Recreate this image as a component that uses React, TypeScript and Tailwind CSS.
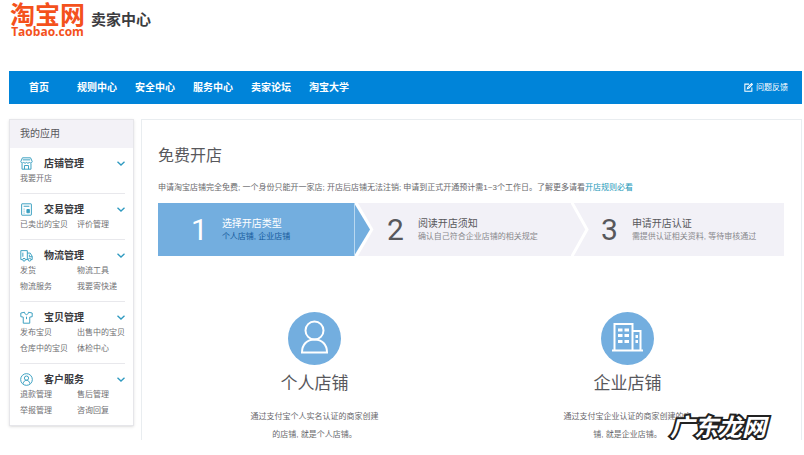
import type { ReactNode } from 'react';

const navLinks = ['规则中心', '安全中心', '服务中心', '卖家论坛', '淘宝大学'];

function ShopIcon() {
  return (
    <>
      <path d="M3 1h10l2 4.500a2 2 0 0 1-3.500 1.200 2.300 2.300 0 0 1-3.500 0 2.300 2.300 0 0 1-3.500 0A2 2 0 0 1 1 5.500z" />
      <path d="M2.500 8v7h11V8M3.500 3.500h9M5.500 15v-4.500h5V15" />
    </>
  );
}

function TradeIcon() {
  return (
    <>
      <rect x="2" y="1" width="12" height="14" rx="0.500" />
      <path d="M4.500 4h7M4.500 7.500h1M4.500 10h1M4.500 12.500h1" />
      <path d="M8.500 8h3v4h-3z" fill="currentColor" />
    </>
  );
}

function TruckIcon() {
  return (
    <>
      <path d="M3 13H1V2h8v11H7M9 5h3.500L15 9v4h-1.500M9 13h1" />
      <path d="M3.500 4.500v5M11.500 7v2.500H15" />
      <circle cx="5" cy="13.200" r="1.700" />
      <circle cx="11.800" cy="13.200" r="1.700" />
    </>
  );
}

function ShirtIcon() {
  return (
    <>
      <path d="M5.500 1.500 1 2.500v4.500l3 .5v7.500h8V7.500l3-.5V2.500l-4.500-1C10 3.500 9.200 4.500 8 4.500S6 3.500 5.500 1.500z" />
      <path d="M8 7v3" />
    </>
  );
}

function ServiceIcon() {
  return (
    <>
      <circle cx="8" cy="8" r="7.200" />
      <circle cx="8" cy="6.300" r="2.600" />
      <path d="M4 13c.3-2.500 1.800-4 4-4s3.700 1.500 4 4" />
    </>
  );
}

const apps: { title: string; icon: ReactNode; items: string[] }[] = [
  { title: '店铺管理', icon: <ShopIcon />, items: ['我要开店'] },
  { title: '交易管理', icon: <TradeIcon />, items: ['已卖出的宝贝', '评价管理'] },
  {
    title: '物流管理',
    icon: <TruckIcon />,
    items: ['发货', '物流工具', '物流服务', '我要寄快递'],
  },
  {
    title: '宝贝管理',
    icon: <ShirtIcon />,
    items: ['发布宝贝', '出售中的宝贝', '仓库中的宝贝', '体检中心'],
  },
  {
    title: '客户服务',
    icon: <ServiceIcon />,
    items: ['退款管理', '售后管理', '举报管理', '咨询回复'],
  },
];

function Header() {
  return (
    <header>
      <div className="flex h-[71px] items-start px-[10px] pt-1">
        <a href="#" className="flex flex-col items-center text-[#f4511c]">
          <span className="text-[25px] leading-[22px] font-bold">淘宝网</span>
          <span className="font-['Open_Sans','Noto_Sans',sans-serif] text-[12px] leading-3 font-bold">
            Taobao.com
          </span>
        </a>
        <span className="ml-[6px] pt-1 text-[15px] leading-6 font-bold text-[#3c3c40]">
          卖家中心
        </span>
      </div>

      <nav className="mr-[2px] ml-[9px] flex h-[33px] items-center bg-[#0084d9] pr-[14px] pl-[20px] text-[10px] font-bold text-white">
        <a href="#" className="w-12">
          首页
        </a>
        <div className="flex gap-[18px]">
          {navLinks.map((link) => (
            <a key={link} href="#">
              {link}
            </a>
          ))}
        </div>
        <a href="#" className="ml-auto flex items-center gap-[3px] text-[8px] font-normal">
          <svg viewBox="0 0 16 16" className="size-[9px]" fill="none" stroke="currentColor" strokeWidth="1.800">
            <path d="M9 2H1.500v12.500H14V8" />
            <path d="m6 10 1-3 6.500-6 1.500 1.500L9 9z" />
          </svg>
          问题反馈
        </a>
      </nav>
    </header>
  );
}

function Sidebar() {
  return (
    <aside className="w-[125px] shrink-0 self-start border border-[#e6e6ea] bg-white shadow-sm">
      <h2 className="h-7 bg-[#f3f2f7] pl-[10px] text-[10px] leading-7 text-[#58585c]">我的应用</h2>
      <div className="pr-2 pl-[10px]">
        {apps.map(({ title, icon, items }) => (
          <section key={title} className="border-b border-[#e8e8ec] pt-2 pb-[6px] last:border-b-0">
            <button
              type="button"
              className="flex h-[15px] w-full items-center text-[10px] font-bold text-[#3a3a3e]"
            >
              <svg
                viewBox="0 0 16 16"
                className="size-[13px] text-[#3a9fc0]"
                fill="none"
                stroke="currentColor"
                strokeWidth="1.200"
              >
                {icon}
              </svg>
              <span className="ml-[11px]">{title}</span>
              <svg viewBox="0 0 8 5" className="ml-auto h-[5px] w-2" fill="none" stroke="#2f9ac0" strokeWidth="1.300">
                <path d="m.5.700 3.500 3.300L7.500.700" />
              </svg>
            </button>
            <ul className="grid grid-cols-[57px_1fr] text-[8px] leading-4 whitespace-nowrap text-[#707074]">
              {items.map((item) => (
                <li key={item}>
                  <a href="#">{item}</a>
                </li>
              ))}
            </ul>
          </section>
        ))}
      </div>
    </aside>
  );
}

function StepText({ num, title, note }: { num: string; title: string; note: ReactNode }) {
  return (
    <>
      <span className="font-[Roboto,sans-serif] text-[30px] leading-8">{num}</span>
      <div className="ml-[14px] whitespace-nowrap">
        <h3 className="text-[10px] leading-[13px]">{title}</h3>
        {note}
      </div>
    </>
  );
}

function Steps() {
  return (
    <ol className="grid h-[53px] grid-cols-[196fr_217fr_213fr] bg-[#f2f1f7] text-[#58585c]">
      <li className="flex items-center bg-[#73aedf] pl-[33px] text-white">
        <StepText
          num="1"
          title="选择开店类型"
          note={<p className="text-[8px] leading-[13px] text-[#165a9c]">个人店铺, 企业店铺</p>}
        />
      </li>
      <li className="relative flex items-center pl-[33px]">
        <svg viewBox="0 0 20 53" className="absolute top-0 left-0 h-full w-5">
          <path d="M0 0h4l15.500 26.500L4 53H0z" fill="#fff" />
          <path d="M0 0 16 26.500 0 53z" fill="#73aedf" />
          <path d="M.5 0v53" stroke="#b9d8f0" />
        </svg>
        <StepText
          num="2"
          title="阅读开店须知"
          note={<p className="text-[8px] leading-[13px] text-[#88888c]">确认自己符合企业店铺的相关规定</p>}
        />
      </li>
      <li className="relative flex items-center pl-[30px]">
        <svg viewBox="0 0 20 53" className="absolute top-0 left-0 h-full w-5" fill="none">
          <path d="M0-2 16 26.500 0 55" stroke="#fff" strokeWidth="3" />
        </svg>
        <StepText
          num="3"
          title="申请开店认证"
          note={<p className="text-[8px] leading-[13px] text-[#88888c]">需提供认证相关资料, 等待审核通过</p>}
        />
      </li>
    </ol>
  );
}

function ShopType({ icon, name, text }: { icon: ReactNode; name: string; text: string }) {
  return (
    <article className="flex flex-col items-center text-center">
      <svg viewBox="0 0 53 53" className="size-[53px]" fill="none" stroke="#fff" strokeWidth="2">
        <circle cx="26.500" cy="26.500" r="26.500" fill="#73aedf" stroke="none" />
        {icon}
      </svg>
      <h3 className="mt-[7px] text-[17px] leading-6 text-[#58585c]">{name}</h3>
      <p className="mt-3 -mb-1 w-[132px] text-[8px] leading-[18px] text-[#68686c]">{text}</p>
    </article>
  );
}

export default function App() {
  return (
    <div className="relative overflow-hidden bg-white font-['Liberation_Sans','Noto_Sans_CJK_SC',sans-serif]" lang="zh-CN">
      <Header />

      <div className="mt-[15px] mr-[2px] ml-[9px] flex gap-[7px]">
        <Sidebar />

        <main className="min-w-0 flex-1 border border-b-0 border-[#e9edf0] pt-6 pr-[17px] pl-4">
          <h1 className="text-[16px] leading-6 text-[#58585c]">免费开店</h1>
          <p className="mt-3 mb-[7px] text-[8px] leading-4 whitespace-nowrap text-[#68686c]">
            申请淘宝店铺完全免费; 一个身份只能开一家店; 开店后店铺无法注销;
            申请到正式开通预计需1~3个工作日。了解更多请看
            <a href="#" className="text-[#2397b8]">
              开店规则必看
            </a>
          </p>

          <Steps />

          <div className="mt-14 grid grid-cols-2">
            <ShopType
              name="个人店铺"
              text="通过支付宝个人实名认证的商家创建的店铺, 就是个人店铺。"
              icon={
                <>
                  <circle cx="26.500" cy="18.500" r="9" />
                  <path d="M14 40.500c0-8 5-13 12.500-13s12.500 5 12.500 13z" />
                </>
              }
            />
            <ShopType
              name="企业店铺"
              text="通过支付宝企业认证的商家创建的店铺, 就是企业店铺。"
              icon={
                <>
                  <path d="M11 38.500h31M13.500 38.500V12h18v26.500M31.500 19h8v19.500" />
                  <path d="M17 18h4.500m2 0H28M17 23.500h4.500m2 0H28M17 29.500h4.500m2 0H28" strokeWidth="3" />
                  <path d="M34.500 24.500h2.500M34.500 29.500h2.500" strokeWidth="3" />
                </>
              }
            />
          </div>
        </main>
      </div>

      {/* site watermark */}
      <span className="absolute right-[38px] bottom-0 text-[24px] leading-6 font-bold text-white italic [-webkit-text-stroke:4px_#222] [paint-order:stroke_fill]">
        广东龙网
      </span>
    </div>
  );
}
